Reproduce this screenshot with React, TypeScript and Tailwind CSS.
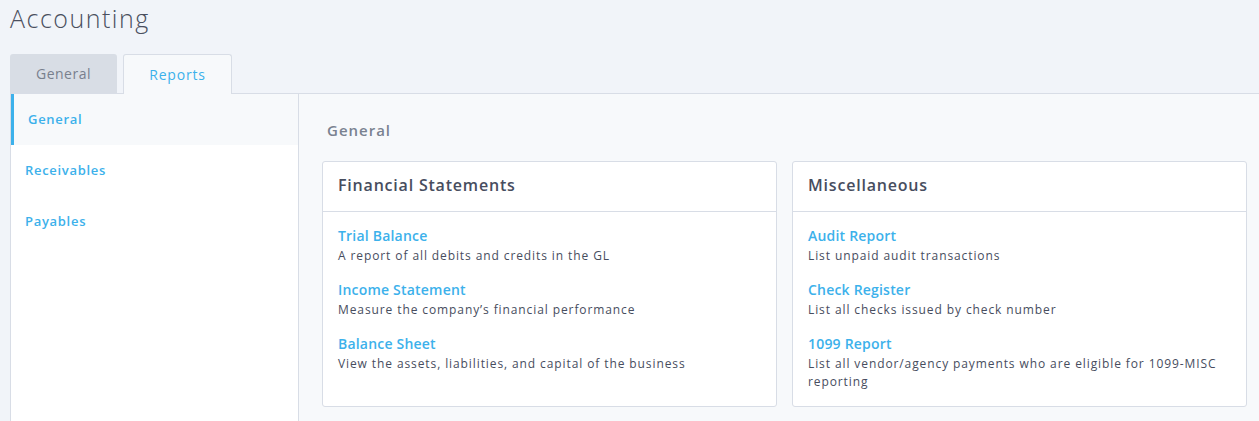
import React from 'react';

type Report = { title: string; description: string };

const financial: Report[] = [
  { title: 'Trial Balance', description: 'A report of all debits and credits in the GL' },
  { title: 'Income Statement', description: 'Measure the company\u2019s financial performance' },
  { title: 'Balance Sheet', description: 'View the assets, liabilities, and capital of the business' },
];

const misc: Report[] = [
  { title: 'Audit Report', description: 'List unpaid audit transactions' },
  { title: 'Check Register', description: 'List all checks issued by check number' },
  { title: '1099 Report', description: 'List all vendor/agency payments who are eligible for 1099-MISC reporting' },
];

const ReportCard = ({ title, reports }: { title: string; reports: Report[] }) => (
  <div className="flex-1 bg-white border border-[#d8dde6] rounded-[3px]">
    <div className="h-[50px] flex items-center px-[15px] pb-[3px] border-b border-[#d8dde6]">
      <h3 className="text-[16px] font-semibold text-[#474d5e] tracking-[0.8px]">{title}</h3>
    </div>
    <div className="px-[15px] pt-[13px] pb-[15px] flex flex-col gap-[14px]">
      {reports.map((r) => (
        <div key={r.title}>
          <a className="block text-[14px] leading-[22px] font-semibold text-[#3cb1eb] cursor-pointer tracking-[0.2px]">{r.title}</a>
          <p className="text-[12px] leading-[18px] text-[#474d5e] tracking-[0.9px]">{r.description}</p>
        </div>
      ))}
    </div>
  </div>
);

const App: React.FC = () => {
  const sideItems = ['General', 'Receivables', 'Payables'];
  return (
    <div className="min-h-screen bg-[#f1f4f9] pl-[10px] font-['Open_Sans',sans-serif] overflow-hidden">
      <h1 className="h-[40px] pt-[2px] text-[25px] leading-[32px] font-light text-[#4a4f5e] tracking-[1.5px]">Accounting</h1>
      <div className="flex gap-[6px] mt-[14px] h-[39px]">
        <button className="w-[107px] h-[39px] rounded-t-[3px] bg-[#d8dde5] text-[14px] text-[#78808d] tracking-[0.5px]">General</button>
        <button className="w-[109px] h-[40px] rounded-t-[3px] bg-[#f7f9fb] border border-b-0 border-[#d8dde6] text-[14px] text-[#3cb1eb] tracking-[0.8px] relative z-10">Reports</button>
      </div>
      <div className="flex border-t border-[#d8dde6] h-[400px]">
        <nav className="w-[289px] bg-white border-l border-r border-[#d8dde6] flex flex-col">
          {sideItems.map((item, i) =>
            i === 0 ? (
              <div key={item} className="h-[51px] flex items-center bg-[#f7f9fb] border-l-[3px] border-[#3cb1eb] pl-[14px] text-[13px] font-semibold text-[#3cb1eb] tracking-[0.7px]">
                {item}
              </div>
            ) : (
              <div key={item} className="h-[51px] flex items-center pl-[14px] text-[13px] font-semibold text-[#3cb1eb] tracking-[0.7px]">
                {item}
              </div>
            )
          )}
        </nav>
        <main className="flex-1 bg-[#f7f9fb] pl-[23px] pr-[12px]">
          <h2 className="pt-[25px] pl-[5px] h-[67px] text-[15px] font-semibold text-[#7a8290] tracking-[1px]">General</h2>
          <div className="flex gap-[15px]">
            <ReportCard title="Financial Statements" reports={financial} />
            <ReportCard title="Miscellaneous" reports={misc} />
          </div>
        </main>
      </div>
    </div>
  );
};

export default App;
